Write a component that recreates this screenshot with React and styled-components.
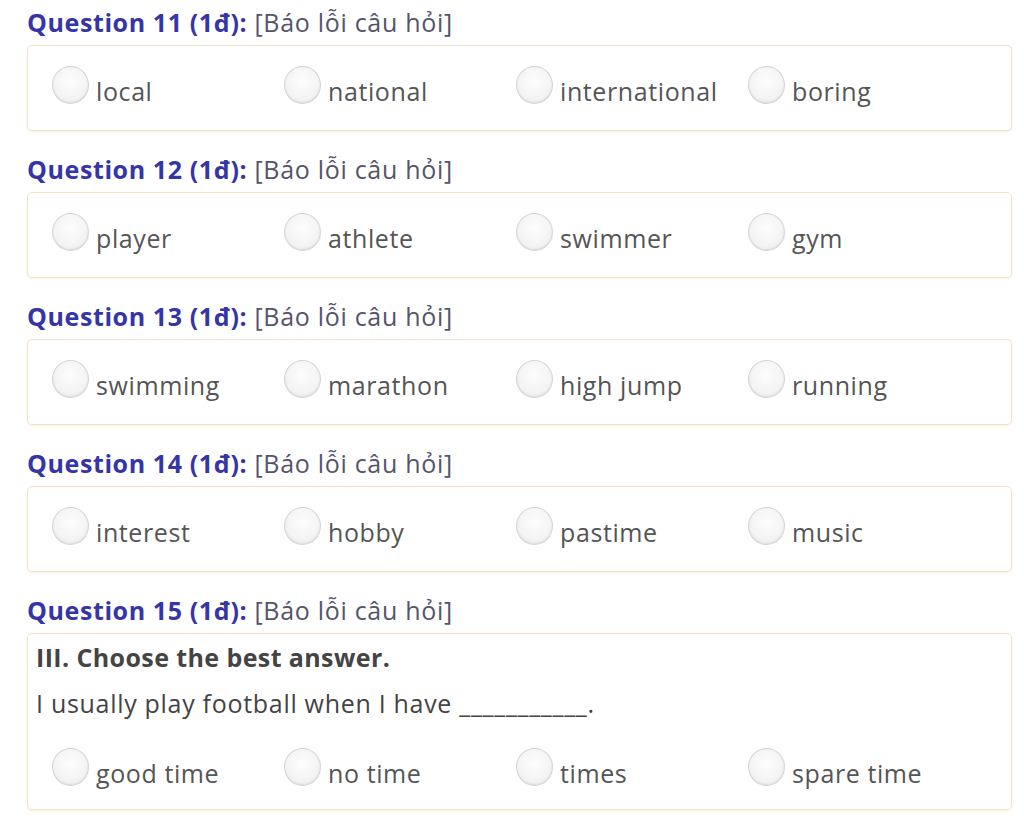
import React from 'react'
import styled, { createGlobalStyle } from 'styled-components'

const GlobalStyle = createGlobalStyle`
  body {
    margin: 0;
    background: #fff;
    font-family: "Open Sans", "Noto Sans", sans-serif;
  }
`

const Page = styled.div`
  width: 1024px;
  padding: 6px 12px 0 27px;
  box-sizing: border-box;
`

const Question = styled.section`
  margin-bottom: 22px;
`

const Heading = styled.div`
  font-size: 25px;
  line-height: 32px;
  height: 32px;
  margin-bottom: 7px;
  color: #55556a;
  letter-spacing: 0.7px;
  white-space: nowrap;
`

const Label = styled.span`
  color: #3535a8;
  font-weight: 700;
  letter-spacing: 0.6px;
`

const Box = styled.div`
  border: 1px solid #f3e3c4;
  border-radius: 5px;
  box-shadow: 0 1px 2px rgba(230, 210, 170, 0.35);
  padding: ${(p) => (p.$intro ? '8px 8px 20px' : '20px 8px 23px 24px')};
`

const Intro = styled.div`
  font-size: 25px;
  color: #444;
  line-height: 30px;
  font-weight: ${(p) => (p.$bold ? 700 : 400)};
  letter-spacing: ${(p) => (p.$bold ? '0.4px' : '0.7px')};
  margin-bottom: ${(p) => (p.$bold ? '16px' : '30px')};
  white-space: nowrap;
`

const Options = styled.div`
  display: grid;
  grid-template-columns: repeat(4, 232px);
  padding-left: ${(p) => (p.$indent ? '16px' : '0')};
`

const Option = styled.label`
  display: flex;
  align-items: flex-start;
  gap: 7px;
  font-size: 25px;
  letter-spacing: 0.6px;
  color: #555;
  height: 41px;
`

const Radio = styled.span`
  width: 37px;
  height: 38px;
  border-radius: 50%;
  border: 1px solid #d4d4d4;
  background: radial-gradient(circle at 50% 40%, #fdfdfd 0%, #f2f2f2 70%, #e4e4e4 100%);
  box-shadow: inset 0 -1px 2px rgba(0, 0, 0, 0.08);
  box-sizing: border-box;
  flex: none;
`

const OptionText = styled.span`
  margin-top: 9px;
  line-height: 32px;
`

const questions = [
  { n: 11, options: ['local', 'national', 'international', 'boring'] },
  { n: 12, options: ['player', 'athlete', 'swimmer', 'gym'] },
  { n: 13, options: ['swimming', 'marathon', 'high jump', 'running'] },
  { n: 14, options: ['interest', 'hobby', 'pastime', 'music'] },
  {
    n: 15,
    intro: ['III. Choose the best answer.', 'I usually play football when I have ___________.'],
    options: ['good time', 'no time', 'times', 'spare time'],
  },
]

export default function App() {
  return (
    <>
      <GlobalStyle />
      <Page>
        {questions.map((q) => (
          <Question key={q.n}>
            <Heading>
              <Label>Question {q.n} (1đ):</Label> [Báo lỗi câu hỏi]
            </Heading>
            <Box $intro={!!q.intro}>
              {q.intro && (
                <>
                  <Intro $bold>{q.intro[0]}</Intro>
                  <Intro>{q.intro[1]}</Intro>
                </>
              )}
              <Options $indent={!!q.intro}>
                {q.options.map((o) => (
                  <Option key={o}>
                    <Radio />
                    <OptionText>{o}</OptionText>
                  </Option>
                ))}
              </Options>
            </Box>
          </Question>
        ))}
      </Page>
    </>
  )
}
